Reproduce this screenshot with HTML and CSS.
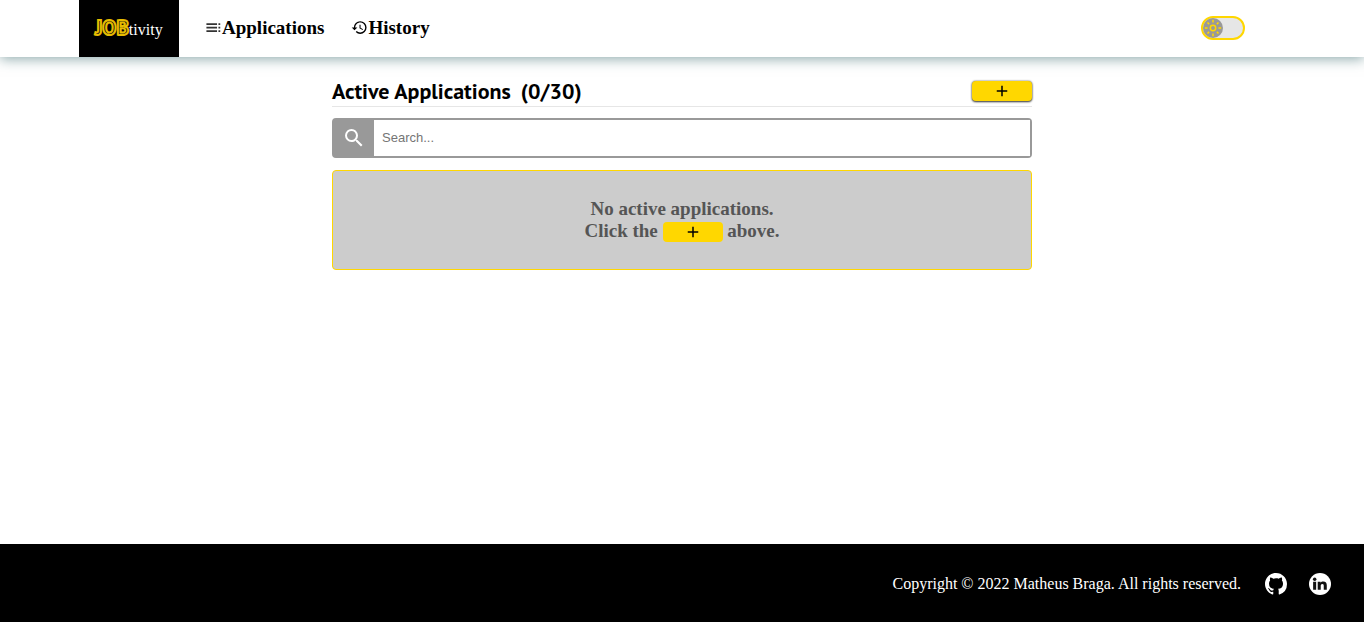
FILE: index.html
```html
<!DOCTYPE html>
<html lang="en">
<head>
<meta charset="utf-8">
<meta name="viewport" content="width=device-width, initial-scale=1">
<title>JOBtivity</title>
<link rel="stylesheet" href="styles.css">
</head>
<body>
<header class="header">
  <a class="logo" href="#"><span class="logo-mark">JOB</span><span>tivity</span></a>
  <nav class="nav">
    <a class="nav-link" href="#">
      <svg class="nav-icon" viewBox="0 0 24 24" fill="#333" aria-hidden="true"><path d="M2 6h15v2.500H2zM2 11h15v2.500H2zM2 16h15v2.500H2zM19 6h2.500v2.500H19zM19 11h2.500v2.500H19zM19 16h2.500v2.500H19z"/></svg>
      <span>Applications</span>
    </a>
    <a class="nav-link" href="#">
      <svg class="nav-icon" viewBox="0 0 24 24" aria-hidden="true"><path d="M13 3a9 9 0 0 0-9 9H1l3.890 3.890.07.14L9 12H6c0-3.870 3.130-7 7-7s7 3.130 7 7-3.130 7-7 7c-1.930 0-3.680-.79-4.940-2.060l-1.420 1.420A8.954 8.954 0 0 0 13 21a9 9 0 0 0 0-18zm-1 5v5l4.280 2.540.72-1.210-3.500-2.080V8H12z"/></svg>
      <span>History</span>
    </a>
  </nav>
  <label class="theme">
    <input class="theme-input" type="checkbox" aria-label="Dark theme">
    <svg class="theme-knob" viewBox="0 0 20 20" fill="none" stroke="#ffd700" aria-hidden="true"><circle cx="10" cy="10" r="10" fill="#999" stroke="none"/><circle cx="10" cy="10" r="2.700" stroke-width="1.500"/><path stroke-width="1.500" d="M10 1.800v2.800M10 15.400v2.800M1.800 10h2.800M15.400 10h2.800M4.500 4.500l1.600 1.600M13.900 13.900l1.600 1.600M4.500 15.500l1.600-1.600M13.900 6.100l1.600-1.600"/></svg>
  </label>
</header>
<main class="main">
  <div class="title-row">
    <h1 class="title"><span>Active Applications</span><span>(0/30)</span></h1>
    <button class="add" type="button" aria-label="Add application"><svg class="plus" viewBox="0 0 24 24" aria-hidden="true"><path d="M19 13h-6v6h-2v-6H5v-2h6V5h2v6h6z"/></svg></button>
  </div>
  <form class="search">
    <label class="search-label" for="search" aria-label="Search"><svg class="search-icon" viewBox="0 0 24 24" fill="#fff" aria-hidden="true"><path d="M15.500 14h-.79l-.28-.27A6.471 6.471 0 0 0 16 9.500 6.500 6.500 0 1 0 9.500 16c1.610 0 3.090-.59 4.230-1.570l.27.28v.79l5 4.990L20.490 19zm-6 0C7.010 14 5 11.990 5 9.500S7.010 5 9.500 5 14 7.010 14 9.500 11.990 14 9.500 14z"/></svg></label>
    <input class="search-input" id="search" type="text" placeholder="Search...">
  </form>
  <section class="empty">
    <p class="empty-line">No active applications.</p>
    <p class="empty-line">Click the <span class="add-sample"><svg class="plus" viewBox="0 0 24 24" aria-hidden="true"><path d="M19 13h-6v6h-2v-6H5v-2h6V5h2v6h6z"/></svg></span> above.</p>
  </section>
</main>
<footer class="footer">
  <p class="copyright">Copyright © 2022 Matheus Braga. All rights reserved.</p>
  <a class="social" href="#" aria-label="GitHub"><svg class="social-icon" viewBox="0 0 16 16" fill="#fff" aria-hidden="true"><path d="M8 0C3.580 0 0 3.580 0 8c0 3.540 2.290 6.530 5.470 7.590.4.070.55-.17.55-.38 0-.19-.01-.82-.01-1.490-2.010.37-2.530-.49-2.690-.94-.09-.23-.48-.94-.82-1.130-.28-.15-.68-.52-.01-.53.63-.01 1.080.58 1.230.82.72 1.210 1.870.87 2.330.66.07-.52.28-.87.51-1.070-1.780-.2-3.640-.89-3.640-3.950 0-.87.31-1.590.82-2.150-.08-.2-.36-1.020.08-2.120 0 0 .67-.21 2.200.82A7.600 7.600 0 0 1 8 3.860c.68 0 1.360.09 2 .27 1.530-1.040 2.200-.82 2.200-.82.44 1.100.16 1.920.08 2.120.51.56.82 1.270.82 2.150 0 3.070-1.870 3.750-3.650 3.950.29.25.54.73.54 1.480 0 1.070-.01 1.930-.01 2.200 0 .21.15.46.55.38A8.010 8.010 0 0 0 16 8c0-4.420-3.580-8-8-8z"/></svg></a>
  <a class="social" href="#" aria-label="LinkedIn"><svg class="social-icon" viewBox="0 0 24 24" aria-hidden="true"><circle cx="12" cy="12" r="12" fill="#fff"/><path fill="#111" d="M4.500 9.500h3.300v8.700H4.500zM9.500 9.500h3.100v1.200c.5-.9 1.500-1.400 2.900-1.400 2.900 0 3.900 1.700 3.900 4v4.900h-3.300v-4.200c0-1.200-.2-2.100-1.500-2.100s-1.800.9-1.800 2.100v4.200H9.500z"/><circle cx="6.200" cy="6.700" r="1.900" fill="#111"/></svg></a>
</footer>
</body>
</html>
```
FILE: styles.css
```css
* { box-sizing: border-box; }

body {
  margin: 0;
  min-height: 100vh;
  display: flex;
  flex-direction: column;
  background: #fff;
  font-family: "Liberation Serif", "Times New Roman", serif;
  font-size: 16px;
}

a { color: inherit; text-decoration: none; }
h1, p { margin: 0; }
svg { display: block; }

.header {
  display: flex;
  align-items: stretch;
  height: 57px;
  padding-left: 79px;
  padding-right: 119px;
  box-shadow: 0 2px 12px rgba(30, 85, 90, 0.5);
}

.logo {
  display: flex;
  align-items: center;
  justify-content: center;
  width: 100px;
  padding-top: 2px;
  background: #000;
  color: #fff;
}

.logo-mark {
  margin-top: -4px;
  font-family: "PT Sans", "Noto Sans", sans-serif;
  font-size: 21px;
  font-weight: 700;
  line-height: 24px;
  color: #111;
  -webkit-text-stroke: 2px #e6bc00;
}

.nav {
  display: flex;
  gap: 27px;
  margin-left: 26px;
  padding-bottom: 2px;
}

.nav-link {
  display: flex;
  align-items: center;
  font-size: 19px;
  font-weight: 700;
}

.nav-icon { width: 17px; height: 17px; }

.theme {
  position: relative;
  align-self: flex-start;
  margin-top: 16px;
  margin-left: auto;
}

.theme-input {
  appearance: none;
  display: block;
  width: 44px;
  height: 24px;
  margin: 0;
  border: 2px solid #ffd700;
  border-radius: 12px;
  background: #e6e6e6;
}

.theme-knob {
  position: absolute;
  top: 2px;
  left: 2px;
  width: 20px;
  height: 20px;
}

.theme-input:checked + .theme-knob { left: 22px; }

.main {
  flex: 1;
  width: 100%;
  max-width: 700px;
  margin: 0 auto;
  padding: 20px 0;
}

.title-row {
  display: flex;
  align-items: center;
  justify-content: space-between;
  height: 30px;
  padding-bottom: 1px;
  border-bottom: 1px solid #e6e6e6;
}

.title {
  display: flex;
  gap: 10px;
  font-family: "PT Sans", "Noto Sans", sans-serif;
  font-size: 22px;
  font-weight: 600;
  line-height: 28px;
}

.add, .add-sample {
  align-items: center;
  justify-content: center;
  width: 60px;
  height: 20px;
  border-radius: 4px;
  background: #ffd700;
}

.add {
  display: flex;
  padding: 0;
  border: 0;
  box-shadow: 0 0 2px #666, 0 1px 2px #333;
}

.add-sample {
  display: inline-flex;
  vertical-align: middle;
}

.plus { width: 18px; height: 18px; }

.search {
  display: flex;
  height: 40px;
  margin-top: 11px;
  border: 2px solid #999;
  border-radius: 4px;
}

.search-label {
  display: flex;
  align-items: center;
  justify-content: center;
  width: 40px;
  background: #999;
}

.search-icon { width: 24px; height: 24px; }

.search-input {
  flex: 1;
  min-width: 0;
  padding: 0 8px 2px;
  border: 0;
  outline: 0;
  background: #fff;
  font-family: "Liberation Sans", Arial, sans-serif;
  font-size: 13px;
}

.search-input::placeholder { color: #757575; }

.empty {
  display: flex;
  flex-direction: column;
  justify-content: center;
  min-height: 100px;
  margin-top: 12px;
  border: 1px solid #ffd700;
  border-radius: 4px;
  background: #ccc;
  color: #555;
  text-align: center;
}

.empty-line {
  font-size: 19px;
  font-weight: 700;
  line-height: 22px;
}

.footer {
  display: flex;
  align-items: center;
  justify-content: flex-end;
  gap: 22px;
  min-height: 78px;
  padding: 2px 33px 0;
  background: #000;
  color: #fff;
}

.copyright { margin-right: 2px; }

.social-icon { width: 22px; height: 22px; }
```
